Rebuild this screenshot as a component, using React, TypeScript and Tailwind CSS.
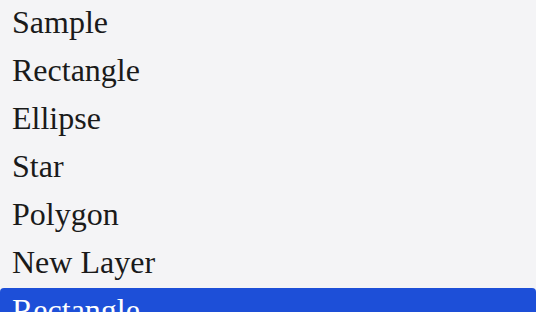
const ITEMS = ['Sample', 'Rectangle', 'Ellipse', 'Star', 'Polygon', 'New Layer', 'Rectangle']

export default function App() {
  const selected = 6
  return (
    <div className="h-[312px] w-[536px] overflow-hidden bg-[#f4f4f6] font-['Liberation_Serif',serif] text-[32px] text-[#1a1a1a]">
      <ul>
        {ITEMS.map((name, i) => (
          <li
            key={i}
            className={`h-12 px-3 leading-[44px] ${
              i === selected ? 'rounded bg-[#1d4fd8] text-white' : ''
            }`}
          >
            {name}
          </li>
        ))}
      </ul>
    </div>
  )
}
